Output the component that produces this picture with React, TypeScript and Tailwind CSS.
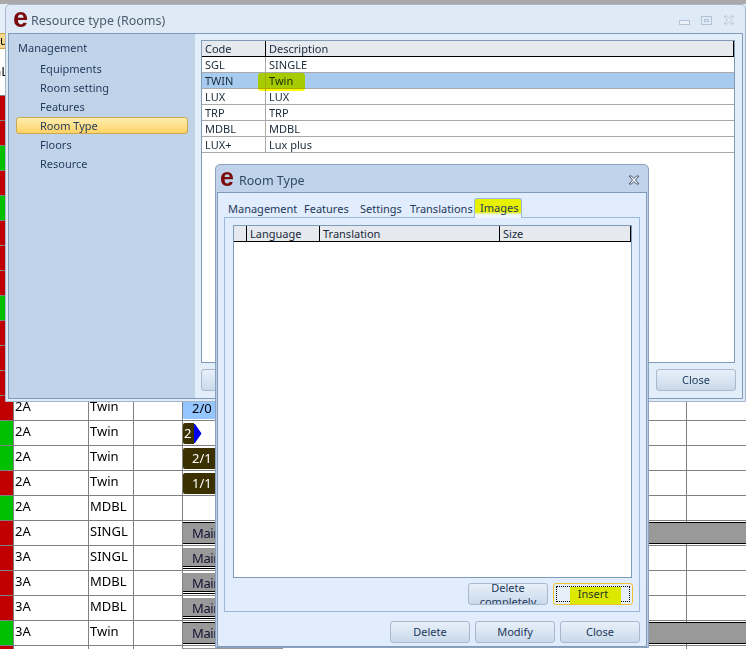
import React from "react";

const FONT = "font-['Noto_Sans','Liberation_Sans',sans-serif]";

type Ev = { kind: "none" | "blue" | "arrow" | "dark" | "main" | "mainLong"; label?: string };
type Row = { color: "r" | "g"; a: string; b: string; ev: Ev };

const none: Ev = { kind: "none" };
const rows: Row[] = [
  { color: "r", a: "", b: "", ev: none },
  { color: "r", a: "", b: "", ev: none },
  { color: "g", a: "", b: "", ev: none },
  { color: "r", a: "", b: "", ev: none },
  { color: "g", a: "", b: "", ev: none },
  { color: "r", a: "", b: "", ev: none },
  { color: "r", a: "", b: "", ev: none },
  { color: "r", a: "", b: "", ev: none },
  { color: "g", a: "", b: "", ev: none },
  { color: "r", a: "", b: "", ev: none },
  { color: "r", a: "", b: "", ev: none },
  { color: "r", a: "", b: "", ev: none },
  { color: "r", a: "2A", b: "Twin", ev: { kind: "blue", label: "2/0" } },
  { color: "g", a: "2A", b: "Twin", ev: { kind: "arrow", label: "2" } },
  { color: "g", a: "2A", b: "Twin", ev: { kind: "dark", label: "2/1" } },
  { color: "r", a: "2A", b: "Twin", ev: { kind: "dark", label: "1/1" } },
  { color: "g", a: "2A", b: "MDBL", ev: none },
  { color: "r", a: "2A", b: "SINGL", ev: { kind: "mainLong", label: "Main" } },
  { color: "r", a: "3A", b: "SINGL", ev: { kind: "main", label: "Main" } },
  { color: "r", a: "3A", b: "MDBL", ev: { kind: "main", label: "Main" } },
  { color: "r", a: "3A", b: "MDBL", ev: { kind: "main", label: "Main" } },
  { color: "g", a: "3A", b: "Twin", ev: { kind: "mainLong", label: "Main" } },
  { color: "r", a: "", b: "", ev: { kind: "main", label: "" } },
];

function Event({ ev }: { ev: Ev }) {
  if (ev.kind === "blue")
    return (
      <div className="absolute left-0 top-[1px] bottom-[1px] w-[60px] bg-[#94c5ff] text-black text-[13px] pl-[9px] leading-[22px] rounded-[2px]">
        {ev.label}
      </div>
    );
  if (ev.kind === "arrow")
    return (
      <div className="absolute left-0 top-[2px] h-[21px] flex items-center">
        <div className="w-[11px] h-[21px] bg-[#3a3000] text-white text-[13px] leading-[21px] pl-[1px] rounded-l-[2px]">{ev.label}</div>
        <svg width="8" height="19" viewBox="0 0 8 19"><path d="M0 0 L1 0 L7.5 9.5 L1 19 L0 19 Z" fill="#0000f0" /></svg>
      </div>
    );
  if (ev.kind === "dark")
    return (
      <div className="absolute left-0 top-[2px] h-[21px] w-[60px] bg-[#3a3000] text-white text-[13px] leading-[21px] pl-[9px] rounded-[2px]">
        {ev.label}
      </div>
    );
  if (ev.kind === "main")
    return (
      <div className="absolute left-0 top-[2px] h-[19px] w-[100px] bg-[#999999] text-[#101030] text-[13px] tracking-[-0.4px] leading-[20px] pl-[9px] border-b border-black shadow-[0_1px_0_#fff,0_2px_0_#000]">
        {ev.label}
      </div>
    );
  if (ev.kind === "mainLong")
    return (
      <div className="absolute left-0 top-[1px] h-[22px] w-[564px] bg-[#999999] text-[#101030] text-[13px] tracking-[-0.4px] leading-[21px] pl-[9px] border-y border-black">
        {ev.label}
      </div>
    );
  return null;
}

function Background() {
  return (
    <div className="w-full">
      <div className="h-[4px] bg-[#a9a9a9]" />
      <div className="h-[29px] bg-[#e4eef6]" />
      <div className="h-[16px] bg-[#f6d88c] border-y border-[#c9a040] text-[12px] leading-[14px] overflow-hidden">u</div>
      <div className="h-[47px] bg-white border-b border-[#808080] flex items-center text-[13px] text-black">
        <span className="w-[8px] flex justify-end overflow-hidden">SGL</span>
      </div>
      {rows.map((r, i) => (
        <div
          key={i}
          className="h-[25px] grid grid-cols-[13px_75px_45px_49px_504px_1fr] border-b border-[#808080] bg-white text-[13px] text-black overflow-hidden"
        >
          <div className={r.color === "r" ? "bg-[#c00000]" : "bg-[#00c000]"} />
          <div className="border-l border-[#808080] pl-[1px] leading-[21px]">{r.a}</div>
          <div className="border-l border-[#808080] pl-[1px] leading-[21px]">{r.b}</div>
          <div className="border-l border-[#808080]" />
          <div className="border-l border-[#808080] relative">
            <Event ev={r.ev} />
          </div>
          <div className="border-l border-[#808080]" />
        </div>
      ))}
    </div>
  );
}

function Logo({ size }: { size: "lg" | "sm" }) {
  return (
    <span
      className={`font-['Liberation_Sans',sans-serif] font-bold text-[#7b0a0a] leading-none ${
        size === "lg" ? "text-[27px] w-[18px] -mt-[1px]" : "text-[25px] w-[18px] -mt-[3px]"
      }`}
    >
      e
    </span>
  );
}

function Btn({ children, className = "" }: { children: React.ReactNode; className?: string }) {
  return (
    <div
      className={`w-[80px] h-[22px] rounded-[3px] border border-[#a9b9cd] bg-gradient-to-b from-[#e8f0f9] to-[#c9d9ea] text-[#1e395b] text-[11px] flex items-center justify-center overflow-hidden ${className}`}
    >
      {children}
    </div>
  );
}

function CloseX({ dark }: { dark?: boolean }) {
  const stroke = dark ? "#4a5a70" : "#b4c4d6";
  return (
    <svg width="12" height="10" viewBox="0 0 12 10">
      <path d="M1 1 H3.5 L6 3.5 L8.5 1 H11 L7.5 5 L11 9 H8.5 L6 6.5 L3.5 9 H1 L4.5 5 Z" fill={dark ? "#f2f5f9" : "#eaf1f8"} stroke={stroke} strokeWidth="1" />
    </svg>
  );
}

function OuterWindow() {
  const items = ["Equipments", "Room setting", "Features", "Room Type", "Floors", "Resource"];
  const list = [
    ["SGL", "SINGLE"],
    ["TWIN", "Twin"],
    ["LUX", "LUX"],
    ["TRP", "TRP"],
    ["MDBL", "MDBL"],
    ["LUX+", "Lux plus"],
  ];
  return (
    <div className="absolute left-[5px] top-[4px] w-[741px] h-[398px] rounded-t-[5px] border border-[#a3b6cc] bg-[#deeaf6] flex flex-col">
      <div className="h-[28px] shrink-0 flex items-center pl-[7px] pr-[10px]">
        <Logo size="lg" />
        <span className="text-[12.5px] text-[#4d5c6d] mt-[5px]">Resource type (Rooms)</span>
        <div className="ml-auto flex items-end gap-[11px] mt-[2px]">
          <div className="w-[11px] h-[5px] border border-[#b4c4d6] bg-[#eaf1f8]" />
          <div className="w-[11px] h-[9px] border border-[#b4c4d6] flex items-center justify-center">
            <div className="w-[5px] h-[3px] border border-[#b4c4d6]" />
          </div>
          <CloseX />
        </div>
      </div>
      <div className="flex-1 mx-[2px] mb-[2px] border border-[#7f9bb8] flex min-h-0">
        <div className="w-[186px] shrink-0 bg-[#c1d3e8] pt-[4px] text-[11px] text-[#1e395b]">
          <div className="pl-[9px] h-[19px] leading-[19px] mb-[2px]">Management</div>
          <div className="flex flex-col">
            {items.map((t) =>
              t === "Room Type" ? (
                <div
                  key={t}
                  className="ml-[7px] w-[172px] h-[17px] my-[1px] pl-[23px] leading-[15px] rounded-[3px] border border-[#c8a850] bg-gradient-to-b from-[#feeeb0] to-[#fdd263]"
                >
                  {t}
                </div>
              ) : (
                <div key={t} className="pl-[31px] h-[19px] leading-[19px]">
                  {t}
                </div>
              )
            )}
          </div>
        </div>
        <div className="flex-1 bg-[#e3eefb] px-[6px] pt-[6px] flex flex-col">
          <div className="w-[534px] h-[323px] border border-[#7f9bb8] bg-white text-[11px] text-[#1a2a3a] shrink-0 relative">
            <div className="h-[16px] bg-[#e6e9ed] border-b border-black flex border-r-black border-r">
              <div className="w-[64px] pl-[3px] border-r border-black leading-[15px]">Code</div>
              <div className="pl-[3px] leading-[15px]">Description</div>
            </div>
            {list.map(([c, d]) => (
              <div
                key={c}
                className={`h-[16px] flex border-b border-[#a9a9a9] ${c === "TWIN" ? "bg-[#a6cbef]" : "bg-white"}`}
              >
                <div className="w-[64px] pl-[3px] border-r border-[#a9a9a9] leading-[15px]">{c}</div>
                <div className="pl-[3px] leading-[15px]">{d}</div>
              </div>
            ))}
            <div className="absolute left-[56px] top-[32px] w-[47px] h-[18px] bg-[#ffff00] mix-blend-multiply rounded-[3px]" />
          </div>
          <div className="flex justify-between mt-[6px]">
            <Btn>{""}</Btn>
            <Btn>Close</Btn>
          </div>
        </div>
      </div>
    </div>
  );
}

function InnerWindow() {
  const tabs = ["Management", "Features", "Settings", "Translations"];
  return (
    <div className="absolute left-[215px] top-[164px] w-[434px] h-[484px] rounded-t-[5px] border border-[#8aa2bf] bg-gradient-to-b from-[#c0d3ea] to-[#b8cde6] flex flex-col">
      <div className="h-[27px] shrink-0 flex items-center pl-[4px] pr-[8px]">
        <Logo size="sm" />
        <span className="text-[12.5px] text-[#2f4a68] ml-[1px] mt-[5px]">Room Type</span>
        <div className="ml-auto mt-[2px]">
          <CloseX dark />
        </div>
      </div>
      <div className="flex-1 mx-[1px] border border-[#7f9bb8] bg-[#e1edfc] px-[6px] pt-[5px] flex flex-col min-h-0">
        <div className="flex h-[19px] pl-[4px] text-[11px] text-[#1e395b] shrink-0 relative z-10">
          {tabs.map((t, i) => (
            <div
              key={t}
              className={`pt-[3px] leading-[15px] ${
                i === 0 ? "w-[76px]" : i === 1 ? "w-[56px]" : i === 2 ? "w-[50px]" : "w-[64px]"
              }`}
            >
              {t}
            </div>
          ))}
          <div className="w-[48px] h-[20px] rounded-t-[3px] border border-b-0 border-[#9db7d8] bg-gradient-to-b from-[#e6f000] from-[70%] to-[#eef5fd] to-[85%] pl-[5px] pt-[1px] leading-[15px]">
            Images
          </div>
        </div>
        <div className="flex-1 mb-[9px] border border-[#9db7d8] pl-[8px] pr-[7px] pt-[7px] flex flex-col min-h-0">
          <div className="h-[353px] shrink-0 border border-[#7f9bb8] bg-white text-[11px] text-[#1a2a3a]">
            <div className="h-[16px] bg-[#e6e9ed] border-b border-black border-r flex">
              <div className="w-[13px] border-r border-black" />
              <div className="w-[73px] pl-[3px] border-r border-black leading-[15px]">Language</div>
              <div className="w-[180px] pl-[3px] border-r border-black leading-[15px]">Translation</div>
              <div className="pl-[3px] leading-[15px]">Size</div>
            </div>
          </div>
          <div className="flex justify-end gap-[5px] mt-[5px] -mr-[1px]">
            <Btn className="items-start! text-[#1e395b] leading-[14px] text-center">
              <span className="block -mt-[3px]">
                Delete
                <br />
                completely
              </span>
            </Btn>
            <div className="w-[80px] h-[22px] rounded-[3px] border border-[#f0c030] bg-[#e6eef8] p-[2px] relative">
              <div className="w-full h-full border border-dotted border-black" />
              <div className="absolute left-[16px] top-[3px] w-[51px] h-[17px] bg-[#dce800]" />
              <div className="absolute inset-0 flex items-center justify-center text-[11px] text-[#2a3a20]">Insert</div>
            </div>
          </div>
        </div>
        <div className="flex justify-end gap-[5px] pb-[3px] shrink-0">
          <Btn>Delete</Btn>
          <Btn>Modify</Btn>
          <Btn>Close</Btn>
        </div>
      </div>
    </div>
  );
}

export default function App() {
  return (
    <div className={`relative w-[746px] h-[649px] overflow-hidden bg-white ${FONT}`}>
      <Background />
      <OuterWindow />
      <InnerWindow />
    </div>
  );
}
